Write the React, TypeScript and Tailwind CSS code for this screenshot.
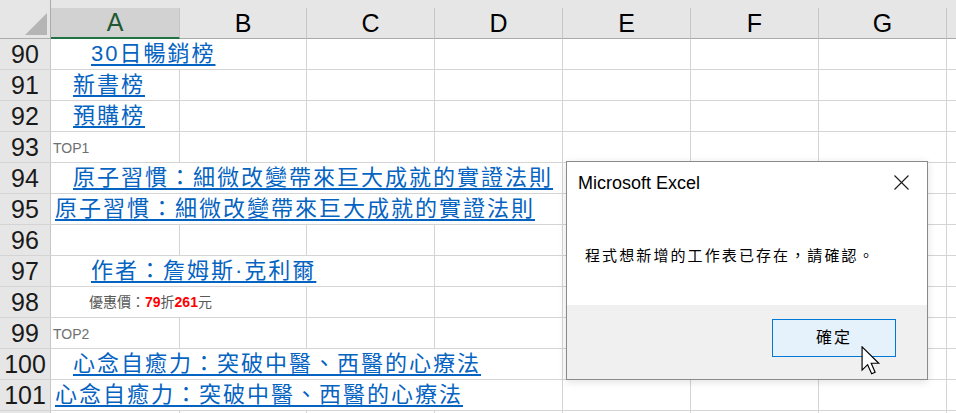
import React from 'react';

type Kind = 'link' | 'tag' | 'price' | 'empty';

type SheetRow = {
  n: number | null;
  kind: Kind;
  span?: 1 | 2 | 3 | 4;
  pad?: string;
  text?: string;
};

const cjk = "font-['Liberation_Sans','Noto_Sans_CJK_TC',sans-serif]";
const gridCols = 'grid grid-cols-[51px_129px_127px_128px_128px_128px_128px_128px_1fr]';

const spanClass = {
  1: 'col-span-1',
  2: 'col-span-2',
  3: 'col-span-3',
  4: 'col-span-4',
};

const rows: SheetRow[] = [
  { n: 90, kind: 'link', span: 2, pad: 'pl-[40px]', text: '30日暢銷榜' },
  { n: 91, kind: 'link', span: 1, pad: 'pl-[22px]', text: '新書榜' },
  { n: 92, kind: 'link', span: 1, pad: 'pl-[22px]', text: '預購榜' },
  { n: 93, kind: 'tag', span: 1, pad: 'pl-[2px]', text: 'TOP1' },
  { n: 94, kind: 'link', span: 4, pad: 'pl-[22px]', text: '原子習慣：細微改變帶來巨大成就的實證法則' },
  { n: 95, kind: 'link', span: 4, pad: 'pl-[4px]', text: '原子習慣：細微改變帶來巨大成就的實證法則' },
  { n: 96, kind: 'empty' },
  { n: 97, kind: 'link', span: 3, pad: 'pl-[40px]', text: '作者：詹姆斯·克利爾' },
  { n: 98, kind: 'price', span: 2, pad: 'pl-[38px]' },
  { n: 99, kind: 'tag', span: 1, pad: 'pl-[2px]', text: 'TOP2' },
  { n: 100, kind: 'link', span: 4, pad: 'pl-[22px]', text: '心念自癒力：突破中醫、西醫的心療法' },
  { n: 101, kind: 'link', span: 4, pad: 'pl-[4px]', text: '心念自癒力：突破中醫、西醫的心療法' },
  { n: null, kind: 'empty' },
];

const letters = ['A', 'B', 'C', 'D', 'E', 'F', 'G'];

function ColumnHeader() {
  return (
    <div
      className={`${gridCols} grid-rows-[39px] h-[39px] bg-[#e6e6e6] font-['Liberation_Sans',Arial,sans-serif]`}
    >
      <div className="border-r border-b border-[#ababab] overflow-hidden">
        <svg width="51" height="38" viewBox="0 0 51 38">
          <polygon points="47,13 47,35 25,35" fill="#b5b5b5" />
        </svg>
      </div>
      {letters.map((l, i) => (
        <div key={l} className="flex flex-col pt-[8px] overflow-hidden">
          <div
            className={
              i === 0
                ? 'flex-1 flex items-center justify-center bg-[#d2d2d2] border-r border-[#c6c6c6] border-b-2 border-b-[#217346] text-[#215732] text-[25px] leading-none'
                : 'flex-1 flex items-center justify-center border-r border-[#c6c6c6] border-b border-b-[#ababab] text-black text-[25px] leading-none'
            }
          >
            {l}
          </div>
        </div>
      ))}
      <div className="flex flex-col pt-[8px]">
        <div className="flex-1 border-b border-[#ababab]" />
      </div>
    </div>
  );
}

function CellText({ row }: { row: SheetRow }) {
  if (row.kind === 'link') {
    return (
      <span
        className={`${cjk} block text-[22px] leading-[22px] tracking-[2px] text-[#0563c1] underline decoration-[#0563c1] underline-offset-[3px] whitespace-nowrap`}
      >
        {row.text}
      </span>
    );
  }
  if (row.kind === 'tag') {
    return (
      <span className="block font-['Liberation_Sans',Arial,sans-serif] text-[14px] leading-[14px] text-[#707070] mb-[3px]">
        {row.text}
      </span>
    );
  }
  if (row.kind === 'price') {
    return (
      <span className={`${cjk} block text-[14px] leading-[14px] text-[#595959] whitespace-nowrap mb-[4px]`}>
        優惠價：<b className="text-[#ff0000]">79</b>折<b className="text-[#ff0000]">261</b>元
      </span>
    );
  }
  return null;
}

function Row({ row }: { row: SheetRow }) {
  const span = row.kind === 'empty' ? 0 : row.span ?? 1;
  const rest = 7 - span;
  return (
    <div className={`${gridCols} grid-rows-[30px] h-[31px] border-b border-[#d4d4d4]`}>
      <div className="bg-[#e6e6e6] border-r border-[#c6c6c6] flex items-center justify-center overflow-hidden font-['Liberation_Sans',Arial,sans-serif] text-[25px] leading-none text-[#1a1a1a]">
        {row.n}
      </div>
      {span > 0 && (
        <div
          className={`${spanClass[row.span ?? 1]} ${row.pad ?? ''} border-r border-[#d4d4d4] flex items-end pb-[4px] overflow-hidden`}
        >
          <CellText row={row} />
        </div>
      )}
      {Array.from({ length: rest }).map((_, i) => (
        <div key={i} className="border-r border-[#d4d4d4]" />
      ))}
      <div />
    </div>
  );
}

function Cursor() {
  return (
    <svg
      className="absolute left-[861px] top-[346px]"
      width="20"
      height="29"
      viewBox="0 0 13.5 20"
    >
      <path
        d="M0.6 0.6 L0.6 16.6 L4.4 12.9 L7.2 19.2 L9.6 18.1 L6.9 11.9 L12.1 11.9 Z"
        fill="#ffffff"
        stroke="#000000"
        strokeWidth="0.8"
        strokeLinejoin="miter"
      />
    </svg>
  );
}

function AlertDialog() {
  return (
    <div className="absolute left-[566px] top-[161px] w-[362px] h-[219px] border border-[#8a8a8a] bg-white flex flex-col shadow-[0_2px_8px_rgba(0,0,0,0.12)]">
      <div className="h-[44px] flex items-start justify-between pl-[11px] pr-[18px] pt-[10px]">
        <span className="font-['Liberation_Sans',Arial,sans-serif] text-[18px] leading-[22px] text-black">
          Microsoft Excel
        </span>
        <svg className="mt-[3px]" width="15" height="15" viewBox="0 0 15 15">
          <path d="M0.5 0.5 L14.5 14.5 M14.5 0.5 L0.5 14.5" stroke="#1a1a1a" strokeWidth="1.1" />
        </svg>
      </div>
      <div className="flex-1 flex items-center pl-[18px]">
        <span className={`${cjk} text-[15px] leading-[15px] tracking-[2.1px] text-black`}>
          程式想新增的工作表已存在，請確認。
        </span>
      </div>
      <div className="h-[74px] bg-[#f0f0f0] flex justify-end items-start pt-[14px] pr-[31px]">
        <button
          className={`${cjk} w-[124px] h-[38px] border border-[#0078d7] bg-[#e5f1fb] text-[16px] tracking-[2px] text-black`}
        >
          確定
        </button>
      </div>
    </div>
  );
}

export default function App() {
  return (
    <div className="relative w-[956px] h-[413px] overflow-hidden bg-white">
      <ColumnHeader />
      {rows.map((r, i) => (
        <Row key={i} row={r} />
      ))}
      <AlertDialog />
      <Cursor />
    </div>
  );
}
